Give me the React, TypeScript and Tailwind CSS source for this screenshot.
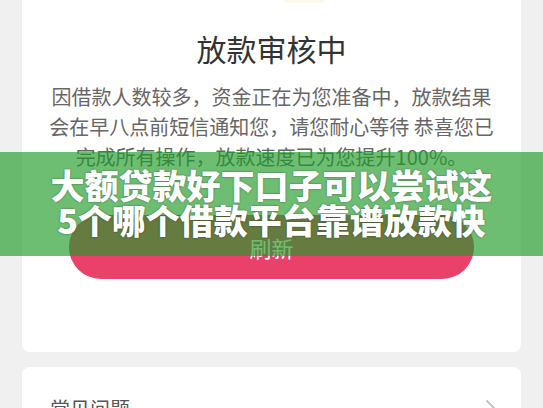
import React from 'react';

const lines = [
  '因借款人数较多，资金正在为您准备中，放款结果',
  '会在早八点前短信通知您，请您耐心等待 恭喜您已',
  '完成所有操作，放款速度已为您提升100%。',
];

const bannerLines = ['大额贷款好下口子可以尝试这', '5个哪个借款平台靠谱放款快'];

const ChevronRight: React.FC = () => (
  <svg width="12" height="18" viewBox="0 0 12 18" fill="none">
    <polyline points="2,2 9,9 2,16" stroke="#c4c4c4" strokeWidth="2" strokeLinecap="round" strokeLinejoin="round" />
  </svg>
);

export default function App() {
  return (
    <div className="relative h-[408px] w-[543px] overflow-hidden bg-[#f0f0f0] font-['Noto_Sans_CJK_SC','Noto_Sans',sans-serif]">
      {/* 放款状态卡片 */}
      <div className="mx-[22px] rounded-b-[8px] bg-white pb-[73px]">
        <div className="flex justify-center">
          <div className="ml-[64px] h-[3px] w-[40px] rounded-b-full bg-[#fbf9ea]" />
        </div>
        <h1 className="mt-[30px] text-center text-[30px] leading-[30px] text-[#333]">放款审核中</h1>
        <p className="mt-[19px] whitespace-nowrap text-center text-[20px] leading-[30px] text-[#666]">
          {lines.map((line) => (
            <span key={line} className="block">
              {line}
            </span>
          ))}
        </p>
        <div className="mx-auto mt-[43px] flex h-[64px] w-[405px] items-center justify-center rounded-full bg-[#e9416a] text-[22px] text-white">
          刷新
        </div>
      </div>

      {/* 常见问题 */}
      <div className="mx-[22px] mt-[15px] flex items-start justify-between rounded-[8px] bg-white pl-[28px] pr-[24px] pt-[30px]">
        <span className="text-[20px] leading-[24px] text-[#555]">常见问题</span>
        <div className="pt-[2px]">
          <ChevronRight />
        </div>
      </div>

      {/* 标题横幅 */}
      <div className="absolute left-0 top-[152px] h-[104px] w-full bg-[rgba(30,155,40,0.65)] pt-[15px] text-center text-[34px] font-black leading-[35px] text-white [text-shadow:0_0_2px_rgba(0,0,0,0.5)]">
        {bannerLines.map((line) => (
          <div key={line} className="whitespace-nowrap">
            {line}
          </div>
        ))}
      </div>
    </div>
  );
}
